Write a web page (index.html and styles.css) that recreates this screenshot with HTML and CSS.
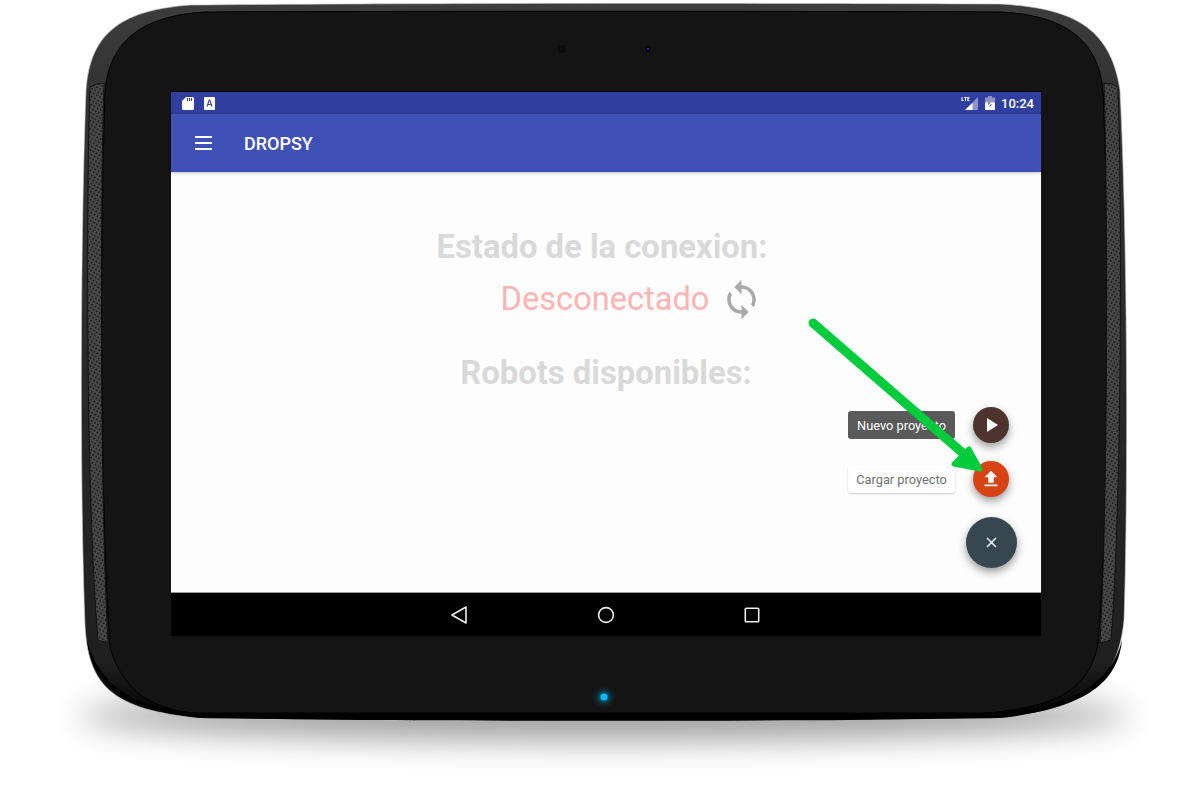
FILE: index.html
```html
<!DOCTYPE html>
<html lang="en">
<head>
  <meta charset="UTF-8" />
  <title>Dropsy</title>
  <link rel="stylesheet" href="styles.css">
</head>
<body>
  <div class="stage">
    <!-- Tablet body drawn behind the screen -->
    <svg class="shell" width="1200" height="797" viewBox="0 0 1200 797">
      <defs>
        <linearGradient id="ringFill" x1="0" y1="0" x2="0" y2="1">
          <stop offset="0" stop-color="#3d3d3d" />
          <stop offset="0.12" stop-color="#333" />
          <stop offset="0.75" stop-color="#242424" />
          <stop offset="0.92" stop-color="#1f1f1f" />
          <stop offset="1" stop-color="#000" />
        </linearGradient>
        <pattern id="holes" width="3.600" height="3.600" patternUnits="userSpaceOnUse" patternTransform="rotate(30)">
          <rect width="3.600" height="3.600" fill="#484848" />
          <circle cx="1.800" cy="1.800" r="1" fill="#1a1a1a" />
        </pattern>
        <filter id="blurBig" x="-20%" y="-200%" width="140%" height="500%">
          <feGaussianBlur stdDeviation="16" />
        </filter>
        <filter id="blurLed" x="-200%" y="-200%" width="500%" height="500%">
          <feGaussianBlur stdDeviation="3" />
        </filter>
      </defs>
      <ellipse cx="604" cy="716" rx="525" ry="24" fill="#000" opacity="0.38" filter="url(#blurBig)" />
      <path class="ring" d="M86 90C90 30 125 10 190 5C400 3 800 3 1000 4C1070 8 1110 25 1120 90C1128 250 1128 500 1124 620C1118 680 1090 708 1000 718C800 721 400 721 200 718C110 710 88 684 85 625C80 500 80 250 86 90Z" />
      <path class="rim" d="M360 720C500 721 700 721 850 720L1000 718C1090 708 1118 680 1122 640C1110 690 1060 708 1000 713L193 713C140 708 100 690 87 640C92 680 115 708 200 718Z" />
      <path class="face" d="M105 90C110 42 140 16 205 12C400 11 800 11 1000 12C1065 15 1098 40 1103 90C1110 250 1110 500 1098 643C1090 690 1055 708 983 713L193 713C150 708 122 690 110 647C100 500 100 250 105 90Z" />
      <path class="speaker" d="M90 87Q97 83 104 83C100 200 100 500 108 643L98 640C86 500 86 200 90 87Z" />
      <path class="speaker" d="M1104 83Q1112 83 1118 87C1122 200 1122 500 1111 640L1100 643C1108 500 1108 200 1104 83Z" />
      <circle cx="562" cy="49" r="4" fill="#0b0b0b" />
      <circle cx="648" cy="49" r="3" fill="#0a0a0a" />
      <rect x="647" y="48" width="2" height="2" fill="#3a16c8" />
      <circle cx="604" cy="697" r="6" fill="#00bfff" opacity="0.55" filter="url(#blurLed)" />
      <circle cx="604" cy="697" r="3.600" fill="#00bdf7" />
    </svg>

    <div class="screen">
      <div class="status-bar">
        <div class="status-group">
          <svg width="12" height="13" viewBox="0 0 12 13"><path fill="#fff" d="M4 0H10.500A1.500 1.500 0 0 1 12 1.500V11.500A1.500 1.500 0 0 1 10.500 13H1.500A1.500 1.500 0 0 1 0 11.500V4Z" /><path fill="#303f9f" d="M5 1h1v3H5zM7 1h1v3H7zM9 1h1v3H9z" /></svg>
          <svg width="11" height="13" viewBox="0 0 11 13"><rect width="11" height="13" rx="1" fill="#fff" /><path fill="#303f9f" d="M2.500 9.500 4.800 2.500h1.400L8.500 9.500H7.200L6.800 8H4.200L3.800 9.500ZM4.500 6.900h2L5.500 3.800Z" /></svg>
        </div>
        <div class="status-group status-right">
          <svg width="18" height="15" viewBox="0 0 18 15"><path fill="#fff" opacity="0.45" d="M17 1V14H4Z" /><path fill="#fff" d="M11.500 7V14H4ZM0.500 1h1v3h1.300v.9H.5ZM3.200 1h2.600v.9h-.8V4.900H4V1.900h-.8ZM6.300 1H8.400v.9H7.300v.6h1v.8h-1v.7h1.100v.9H6.300Z" /></svg>
          <svg width="10" height="14" viewBox="0 0 10 14"><path fill="#fff" opacity="0.45" d="M3 0H7V1.500H10V7H0V1.500H3Z" /><path fill="#fff" d="M0 6.500H3.500L3 9 5.800 6.500H10V14H0ZM5 8.500 4.500 11 7 8.500Z" /></svg>
          <span class="clock">10:24</span>
        </div>
      </div>

      <div class="app-bar">
        <div class="menu-icon"><span></span><span></span><span></span></div>
        <div class="app-title">DROPSY</div>
      </div>

      <div class="content">
        <h2 class="heading heading-state">Estado de la conexion:</h2>
        <div class="state-row">
          <span class="state-text">Desconectado</span>
          <svg width="43" height="43" viewBox="0 0 24 24"><path fill="#a9a9a9" d="M12 4V1L8 5l4 4V6c3.310 0 6 2.690 6 6 0 1.010-.25 1.970-.7 2.800l1.460 1.460C19.540 15.030 20 13.570 20 12c0-4.420-3.580-8-8-8zm0 14c-3.310 0-6-2.690-6-6 0-1.010.25-1.970.7-2.800L5.240 7.740C4.460 8.970 4 10.430 4 12c0 4.420 3.580 8 8 8v3l4-4-4-4v3z" /></svg>
        </div>
        <h2 class="heading heading-robots">Robots disponibles:</h2>

        <!-- Floating action menu -->
        <div class="fab-menu">
          <div class="fab-row">
            <span class="fab-label label-dark">Nuevo proyecto</span>
            <div class="fab fab-small fab-brown">
              <svg width="24" height="24" viewBox="0 0 24 24"><path fill="#fff" d="M8 5v14l11-7z" /></svg>
            </div>
          </div>
          <div class="fab-row">
            <span class="fab-label label-light">Cargar proyecto</span>
            <div class="fab fab-small fab-orange">
              <svg width="22" height="22" viewBox="0 0 24 24"><path fill="#fff" d="M9 16h6v-6h4l-7-7-7 7h4zm-4 2h14v2H5z" /></svg>
            </div>
          </div>
          <div class="fab fab-main">
            <svg width="17" height="17" viewBox="0 0 24 24"><path fill="#fff" d="M19 6.410 17.590 5 12 10.590 6.410 5 5 6.410 10.590 12 5 17.590 6.410 19 12 13.410 17.590 19 19 17.590 13.410 12z" /></svg>
          </div>
        </div>
      </div>

      <div class="nav-bar">
        <svg width="18" height="20" viewBox="0 0 18 20"><path fill="none" stroke="#eee" stroke-width="1.600" stroke-linejoin="round" d="M16 2V18L2 10Z" /></svg>
        <svg width="18" height="18" viewBox="0 0 18 18"><circle cx="9" cy="9" r="7.400" fill="none" stroke="#eee" stroke-width="1.600" /></svg>
        <svg width="16" height="16" viewBox="0 0 16 16"><rect x="1.300" y="1.300" width="13.400" height="13.400" rx="0.800" fill="none" stroke="#eee" stroke-width="1.600" /></svg>
      </div>
    </div>

    <!-- Green annotation arrow -->
    <svg class="arrow" width="1200" height="797" viewBox="0 0 1200 797">
      <path fill="none" stroke="#00cc3c" stroke-width="9" stroke-linecap="round" d="M813 323 972 461" />
      <path fill="#00cc3c" stroke="#00cc3c" stroke-width="5" stroke-linejoin="round" d="M980 469 954 464 969 449Z" />
    </svg>
  </div>
</body>
</html>
```

FILE: styles.css
```css
html, body {
  margin: 0;
  padding: 0;
  background-color: #fff;
}
/* Page is the tablet photo, screen sits in the face */
.stage {
  position: relative;
  width: 1200px;
  height: 797px;
  overflow: hidden;
  box-sizing: border-box;
  padding: 92px 159px 161px 171px;
  font-family: Roboto, "Liberation Sans", sans-serif;
}
.shell {
  position: absolute;
  top: 0;
  left: 0;
}
.ring {
  fill: url(#ringFill);
  stroke: #c9c9c9;
  stroke-width: 0.6;
}
.rim {
  fill: #000;
}
.face {
  fill: #141414;
  stroke: #000;
  stroke-width: 1;
}
.speaker {
  fill: url(#holes);
  stroke: #0a0a0a;
  stroke-width: 0.8;
}
.arrow {
  position: absolute;
  top: 0;
  left: 0;
}

/* ---------- Screen ---------- */
.screen {
  position: relative;
  display: flex;
  flex-direction: column;
  height: 100%;
  background-color: #000;
  box-shadow: 0 -1px 0 #000;
}
.status-bar {
  display: flex;
  justify-content: space-between;
  align-items: center;
  height: 22px;
  padding: 0 7px 0 11px;
  background-color: #303f9f;
}
.status-group {
  display: flex;
  align-items: center;
  gap: 10px;
}
.status-right {
  gap: 6px;
}
.clock {
  color: #fff;
  font-size: 13px;
  font-weight: 500;
}
.app-bar {
  position: relative;
  z-index: 1;
  display: flex;
  align-items: center;
  gap: 32px;
  height: 58px;
  padding-left: 24px;
  background-color: #3f51b5;
  box-shadow: 0 1px 3px rgba(0, 0, 0, 0.25);
}
.menu-icon {
  display: flex;
  flex-direction: column;
  gap: 4px;
  width: 17px;
}
.menu-icon span {
  height: 2px;
  background-color: #fff;
}
.app-title {
  color: #fff;
  font-size: 18px;
  font-weight: 500;
}

/* ---------- Content, dimmed by the open menu ---------- */
.content {
  position: relative;
  flex: 1;
  display: flex;
  flex-direction: column;
  align-items: center;
  padding-top: 56px;
  background-color: #fdfdfd;
  border-bottom: 1px solid #999;
}
.heading {
  margin: 0;
  color: #d9d9d9;
  font-size: 32.800px;
  font-weight: 700;
  line-height: 38px;
}
.heading-state {
  padding-right: 8px;
}
.heading-robots {
  margin-top: 32px;
}
.state-row {
  display: flex;
  align-items: center;
  gap: 11px;
  height: 46px;
  margin-top: 10px;
  padding-left: 52px;
}
.state-text {
  color: #ffb3b3;
  font-size: 32.600px;
}
.fab-menu {
  position: absolute;
  right: 24px;
  bottom: 24px;
  display: flex;
  flex-direction: column;
  align-items: flex-end;
  gap: 18px;
}
.fab-row {
  display: flex;
  align-items: center;
  gap: 18px;
  margin-right: 8px;
}
.fab {
  display: flex;
  align-items: center;
  justify-content: center;
  border-radius: 50%;
  box-shadow: 0 4px 8px rgba(0, 0, 0, 0.4);
}
.fab-small {
  width: 36px;
  height: 36px;
}
.fab-brown {
  background-color: #4e342e;
}
.fab-orange {
  background-color: #d84315;
}
.fab-main {
  width: 51px;
  height: 51px;
  margin-top: 2px;
  background-color: #37474f;
}
.fab-label {
  display: flex;
  align-items: center;
  justify-content: center;
  width: 107px;
  height: 28px;
  border-radius: 3px;
  font-size: 12.800px;
}
.label-dark {
  color: #fff;
  background-color: #5a5a5a;
}
.label-light {
  color: #707070;
  background-color: #fff;
  box-shadow: 0 1px 2px rgba(0, 0, 0, 0.2);
}
.nav-bar {
  display: flex;
  align-items: center;
  justify-content: center;
  gap: 129px;
  height: 43px;
  padding-right: 2px;
  background-color: #000;
}
```
